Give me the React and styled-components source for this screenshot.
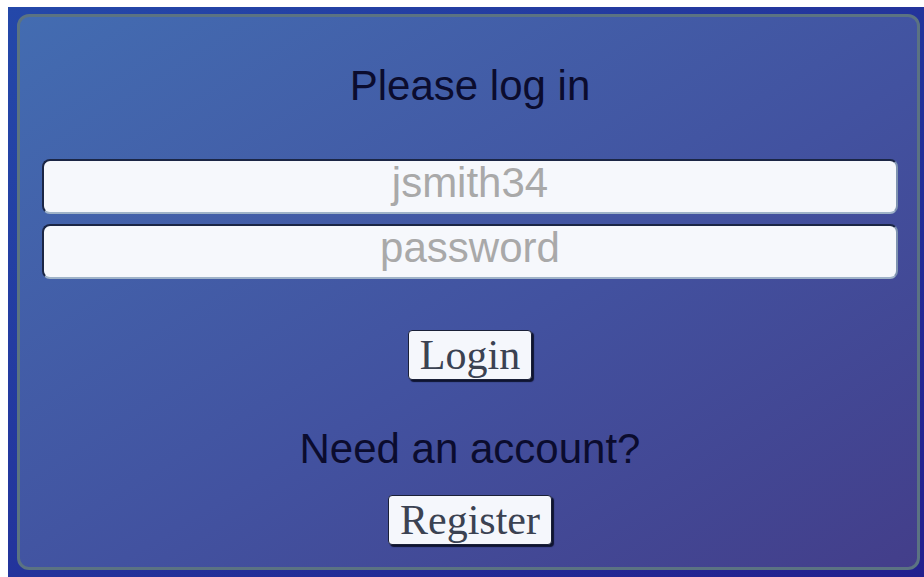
import React from "react";
import styled, { createGlobalStyle } from "styled-components";

const GlobalStyle = createGlobalStyle`
  html, body {
    background: #ffffff;
  }
  body {
    margin: 7px 0 0 8px;
    overflow: hidden;
  }
  * {
    box-sizing: border-box;
  }
`;

const Backdrop = styled.div`
  height: calc(100vh - 7px);
  padding: 7px 4px 7px 9px;
  background: linear-gradient(to bottom right, #2448a9, #22208e);
  display: flex;
`;

const Card = styled.form`
  flex: 1;
  border: 3px solid #5b7382;
  border-radius: 12px;
  background: linear-gradient(to bottom right, #436cb1, #4252a0 55%, #433e8a);
  padding: 48px 19px 0 22px;
  display: flex;
  flex-direction: column;
  align-items: center;
  font-family: "Liberation Sans", Arial, sans-serif;
`;

const Heading = styled.h1`
  margin: 0 0 ${(p) => p.$gap}px;
  font-size: 42px;
  line-height: 42px;
  font-weight: normal;
  color: #0b0c2e;
`;

const Fields = styled.div`
  align-self: stretch;
  display: flex;
  flex-direction: column;
  gap: 10px;
  margin-bottom: 51px;
`;

const Field = styled.input`
  width: 100%;
  height: 55px;
  padding: 0 12px 7px;
  border: 2px solid #1b2645;
  border-bottom-color: #9fb3c8;
  border-right-color: #7f93b0;
  border-radius: 8px;
  background: #f6f8fc;
  font-family: "Liberation Sans", Arial, sans-serif;
  font-size: 42px;
  text-align: center;
  color: #222;
  outline: none;

  &::placeholder {
    color: #a9a9a9;
  }
`;

const Button = styled.button`
  margin: 0 0 ${(p) => p.$gap}px;
  height: 50px;
  padding: 0 11px;
  border: 1px solid #1a2038;
  border-radius: 4px;
  background: #f5f7fc;
  box-shadow: 2px 2px 1px #0f1430;
  font-family: "Liberation Serif", "Times New Roman", serif;
  font-size: 42px;
  line-height: 46px;
  color: #3b4252;
  cursor: pointer;
`;

export default function App() {
  return (
    <>
      <GlobalStyle />
      <Backdrop>
        <Card onSubmit={(e) => e.preventDefault()}>
          <Heading $gap={52}>Please log in</Heading>
          <Fields>
            <Field type="text" placeholder="jsmith34" />
            <Field type="password" placeholder="password" />
          </Fields>
          <Button type="submit" $gap={48}>Login</Button>
          <Heading as="p" $gap={25}>Need an account?</Heading>
          <Button type="button" $gap={0}>Register</Button>
        </Card>
      </Backdrop>
    </>
  );
}
